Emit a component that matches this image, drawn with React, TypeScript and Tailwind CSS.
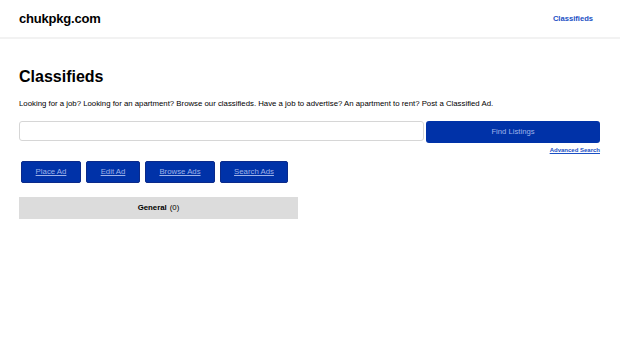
const buttons = [
  { label: 'Place Ad', w: 'w-[60px]' },
  { label: 'Edit Ad', w: 'w-[54px]' },
  { label: 'Browse Ads', w: 'w-[70px]' },
  { label: 'Search Ads', w: 'w-[68px]' },
]

export default function App() {
  return (
    <div className="min-h-[343px] bg-white font-['Liberation_Sans',Arial,sans-serif] text-black">
      <header className="flex h-[39px] items-center justify-between border-b-2 border-[#f2f2f2] pl-[19px] pr-[27px]">
        <span className="text-[13px] font-bold tracking-[-0.2px]">chukpkg.com</span>
        <a className="text-[7.6px] font-bold text-[#1a4fc4]">Classifieds</a>
      </header>

      <main className="px-[19px] pt-[28px]">
        <h1 className="text-[16px] leading-[20px] font-bold">Classifieds</h1>
        <p className="mt-[11px] text-[7.8px] leading-[12px]">
          Looking for a job? Looking for an apartment? Browse our classifieds. Have a job to advertise? An apartment to rent? Post a Classified Ad.
        </p>

        <div className="mt-[11px] flex items-start gap-[2px] pr-[1px]">
          <input className="h-[20px] w-[405px] rounded-[3px] border border-[#d6d6d6] bg-white outline-none" />
          <div className="flex flex-1 flex-col items-end">
            <button className="h-[22px] w-full rounded-[3px] bg-[#0032a8] text-[7.7px] text-[#9fb3e8]">
              Find Listings
            </button>
            <a className="mt-[3px] text-[6px] font-bold leading-[8px] text-[#1a4fc4] underline">Advanced Search</a>
          </div>
        </div>

        <div className="mt-[7px] flex gap-[5px] pl-[2px]">
          {buttons.map((b) => (
            <button
              key={b.label}
              className={`h-[22px] ${b.w} rounded-[2px] border border-[#0b2a8a] bg-[#0032a8] text-[7.8px] text-[#9fb3e8] underline`}
            >
              {b.label}
            </button>
          ))}
        </div>

        <div className="mt-[14px] flex h-[22px] w-[279px] items-center justify-center bg-[#dcdcdc] text-[7.8px]">
          <span className="font-bold">General</span>
          <span className="ml-[3px]">(0)</span>
        </div>
      </main>
    </div>
  )
}
